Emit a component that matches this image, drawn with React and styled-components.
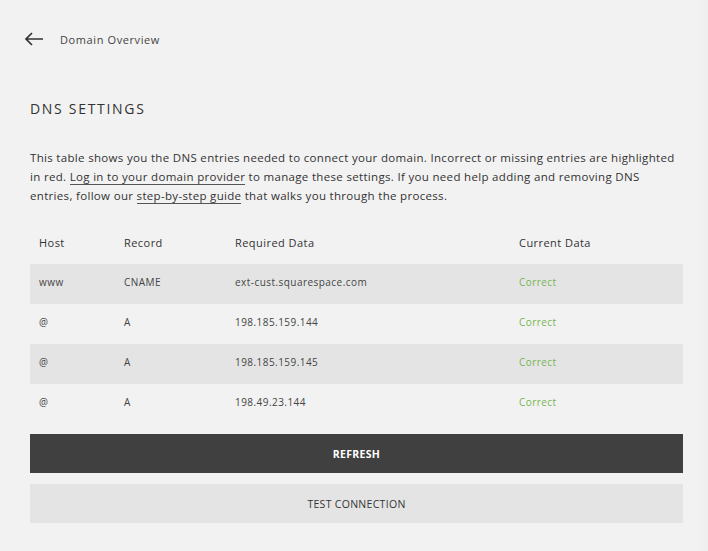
import React from "react";
import styled, { createGlobalStyle } from "styled-components";

const GlobalStyle = createGlobalStyle`
  html, body {
    margin: 0;
    padding: 0;
    background: #f2f2f2;
  }
  body {
    font-family: "Open Sans", "Liberation Sans", sans-serif;
    color: #333;
  }
`;

const Page = styled.div`
  width: 708px;
  height: 551px;
  box-sizing: border-box;
  padding: 0 25px 0 30px;
  background: #f2f2f2;
  box-shadow: inset -10px 0 8px -6px rgba(0, 0, 0, 0.025);
`;

const BackLink = styled.a`
  display: flex;
  align-items: center;
  gap: 16px;
  height: 78px;
  margin-left: -6px;
  font-size: 11px;
  letter-spacing: 0.6px;
  color: #444;
  text-decoration: none;
`;

const Title = styled.h1`
  margin: 20px 0 0;
  font-size: 14px;
  font-weight: 500;
  letter-spacing: 1.7px;
  color: #333;
  line-height: 22px;
`;

const Intro = styled.p`
  margin: 28px 0 0;
  font-size: 11.5px;
  line-height: 19px;
  letter-spacing: 0.32px;
  color: #333;
`;

const Link = styled.a`
  color: #333;
  text-decoration: none;
  border-bottom: 1px solid #555;
`;

const Table = styled.div`
  margin-top: 19px;
  display: flex;
  flex-direction: column;
`;

const Row = styled.div`
  display: grid;
  grid-template-columns: 85px 111px 284px 1fr;
  align-items: center;
  height: 40px;
  box-sizing: border-box;
  padding: 0 0 4px 9px;
  background: ${(p) => (p.$striped ? "#e4e4e4" : "transparent")};
  font-size: ${(p) => (p.$head ? "11px" : "10px")};
  letter-spacing: 0.45px;
  color: ${(p) => (p.$head ? "#333" : "#444")};
`;

const Status = styled.span`
  color: #76b553;
`;

const Button = styled.button`
  display: block;
  width: 100%;
  height: 39px;
  border: none;
  font-family: "Open Sans", "Liberation Sans", sans-serif;
  font-size: 10.5px;
  font-weight: ${(p) => (p.$primary ? 700 : 400)};
  letter-spacing: 0.3px;
  background: ${(p) => (p.$primary ? "#404040" : "#e4e4e4")};
  color: ${(p) => (p.$primary ? "#fff" : "#333")};
  margin-top: ${(p) => (p.$primary ? "10px" : "11px")};
`;

const records = [
  { host: "www", type: "CNAME", data: "ext-cust.squarespace.com" },
  { host: "@", type: "A", data: "198.185.159.144" },
  { host: "@", type: "A", data: "198.185.159.145" },
  { host: "@", type: "A", data: "198.49.23.144" },
];

const App = () => {
  return (
    <Page>
      <GlobalStyle />
      <BackLink href="#">
        <svg width="20" height="14" viewBox="0 0 20 14" fill="none" stroke="#333" strokeWidth="1.7">
          <path d="M19 7H2M8 1L2 7l6 6" />
        </svg>
        Domain Overview
      </BackLink>
      <Title>DNS SETTINGS</Title>
      <Intro>
        This table shows you the DNS entries needed to connect your domain. Incorrect or missing entries are highlighted
        <br />
        in red. <Link href="#">Log in to your domain provider</Link> to manage these settings. If you need help adding and removing DNS
        <br />
        entries, follow our <Link href="#">step-by-step guide</Link> that walks you through the process.
      </Intro>
      <Table>
        <Row $head>
          <span>Host</span>
          <span>Record</span>
          <span>Required Data</span>
          <span>Current Data</span>
        </Row>
        {records.map((r, i) => (
          <Row key={i} $striped={i % 2 === 0}>
            <span>{r.host}</span>
            <span>{r.type}</span>
            <span>{r.data}</span>
            <Status>Correct</Status>
          </Row>
        ))}
      </Table>
      <Button $primary>REFRESH</Button>
      <Button>TEST CONNECTION</Button>
    </Page>
  );
};

export default App;
